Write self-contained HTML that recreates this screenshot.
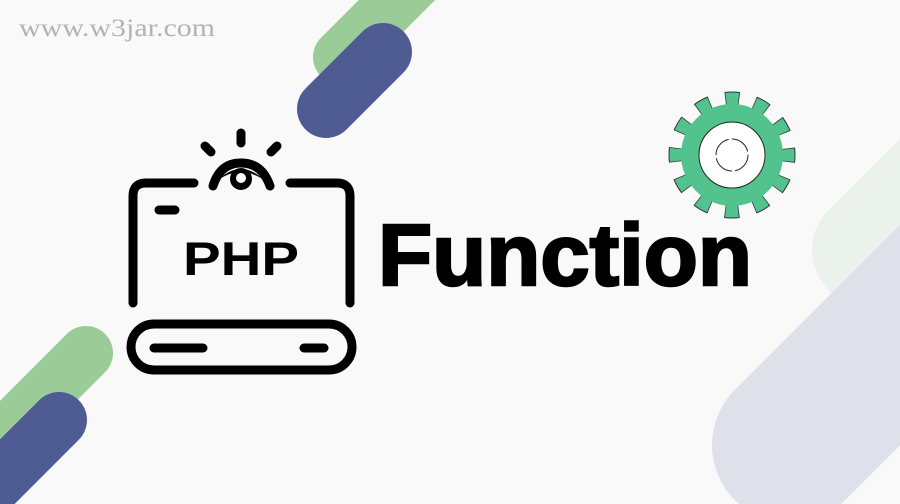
<!DOCTYPE html>
<html><head><meta charset="utf-8"><style>
html,body{margin:0;padding:0;width:900px;height:504px;overflow:hidden;background:#f9f9f9}
svg{display:block;overflow:hidden}
</style></head><body>
<svg width="900" height="504" viewBox="0 0 900 504" xmlns="http://www.w3.org/2000/svg">
<rect width="900" height="504" fill="#f9f9f9"/>
<line x1="868" y1="250" x2="1020" y2="98" stroke="#ebf1ec" stroke-width="112" stroke-linecap="round"/>
<line x1="790" y1="445" x2="1040" y2="195" stroke="#dfe1ea" stroke-width="156" stroke-linecap="round"/>
<line x1="340" y1="57" x2="470" y2="-73" stroke="#9bcc98" stroke-width="54" stroke-linecap="round"/>
<line x1="326" y1="109" x2="383" y2="52" stroke="#4f5b93" stroke-width="58" stroke-linecap="round"/>
<line x1="86" y1="353" x2="-70" y2="509" stroke="#9bcc98" stroke-width="54" stroke-linecap="round"/>
<line x1="59" y1="420" x2="-70" y2="549" stroke="#4f5b93" stroke-width="56" stroke-linecap="round"/>
<text x="19" y="36" font-family="Liberation Serif, serif" font-size="25" fill="#b3b3b3" textLength="196" lengthAdjust="spacingAndGlyphs">www.w3jar.com</text>
<g fill="none" stroke="#000" stroke-width="9" stroke-linecap="round" stroke-linejoin="round">
<path d="M133 303 V196 Q133 183 146 183 H194"/>
<path d="M290 183 H337 Q350 183 350 196 V303"/>
<line x1="159" y1="210" x2="175" y2="210"/>
<rect x="131" y="324" width="221" height="46" rx="23"/>
<line x1="154" y1="348" x2="203" y2="348"/>
<line x1="304" y1="348" x2="324" y2="348"/>
<line x1="241" y1="133" x2="241" y2="143"/>
<line x1="205" y1="146" x2="211" y2="152"/>
<line x1="277" y1="146" x2="271" y2="152"/>
</g>
<path d="M213 186 Q220 163 241 163 Q262 163 270 186" fill="none" stroke="#000" stroke-width="9" stroke-linecap="round"/>
<path d="M218 180 Q241 158 264 180 Q252 172 241 172 Q230 172 218 180 Z" fill="#000"/>
<circle cx="241" cy="179" r="11" fill="#000"/>
<circle cx="241" cy="178" r="5" fill="#fff"/>
<text x="183" y="275" font-family="Liberation Sans, sans-serif" font-weight="bold" font-size="47" textLength="116" lengthAdjust="spacingAndGlyphs" fill="#000">PHP</text>
<text x="378" y="285" font-family="Liberation Sans, sans-serif" font-weight="bold" font-size="87" textLength="374" lengthAdjust="spacingAndGlyphs" fill="#000" stroke="#000" stroke-width="2.5">Function</text>
<g transform="translate(732,155)">
<circle r="56" fill="none" stroke="#333" stroke-width="15" stroke-dasharray="14 15.32" stroke-dashoffset="7"/>
<circle r="56" fill="none" stroke="#52c38c" stroke-width="13" stroke-dasharray="12.5 16.82" stroke-dashoffset="6.25"/>
<circle r="42" fill="none" stroke="#52c38c" stroke-width="18"/>
<circle r="33" fill="#fff" stroke="#222" stroke-width="1"/>
<circle r="16" fill="none" stroke="#222" stroke-width="1" stroke-dasharray="22 3"/>
</g>
</svg>
</body></html>
